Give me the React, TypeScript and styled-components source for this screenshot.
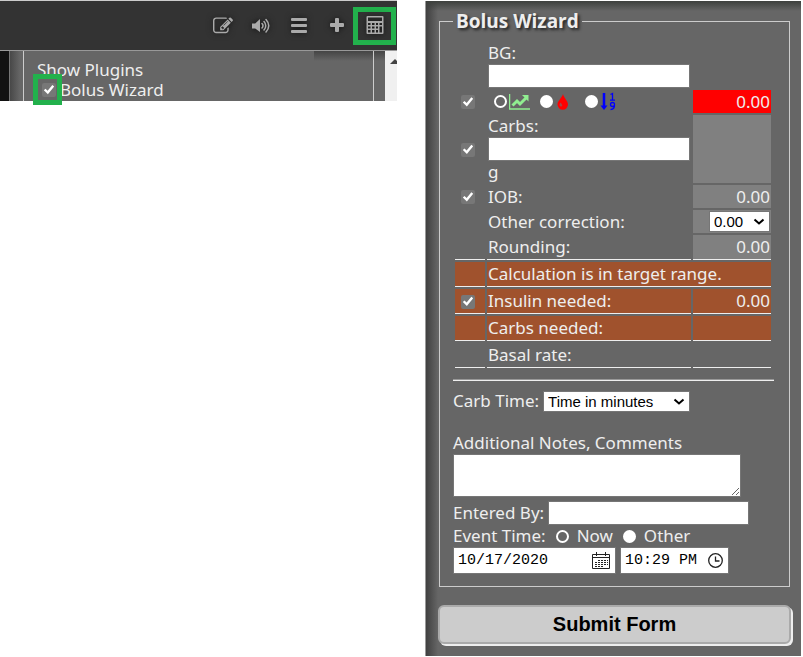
import React from "react";
import styled, { createGlobalStyle } from "styled-components";

const GlobalStyle = createGlobalStyle`
  *, *::before, *::after { box-sizing: border-box; }
  body {
    margin: 0;
    background: #fff;
    color: #eee;
    font-family: "Noto Sans", "Open Sans", sans-serif;
    font-size: 17px;
    line-height: 22px;
  }
`;

const Page = styled.main`
  display: grid;
  grid-template-columns: 397fr 376fr;
  gap: 28px;
  align-items: start;
  padding-right: 2px;
`;

/* ---------- toolbar preview ---------- */

const Preview = styled.section`
  border-top: 1px solid #ccc;
`;

const Toolbar = styled.nav`
  display: flex;
  align-items: center;
  justify-content: flex-end;
  height: 49px;
  padding-right: 1px;
  background: #333;
`;

const ToolButton = styled.button<{ $marked?: boolean }>`
  display: flex;
  align-items: center;
  justify-content: center;
  width: ${(p) => (p.$marked ? 43 : 33)}px;
  height: 38px;
  margin: 0 0 0 ${(p) => (p.$marked ? 0 : 5)}px;
  padding: 0;
  border: ${(p) => (p.$marked ? "5px solid #22b14c" : "0")};
  background: none;
  color: #aaa;
  cursor: pointer;
  svg { filter: drop-shadow(0 0 3px #111); }
`;

const PluginArea = styled.div`
  display: flex;
  height: 51px;
  border-top: 1px solid #999;
  background: #666;
`;

const ChartEdge = styled.div`
  width: 10px;
  border-right: 1px solid #777;
  background: #111;
`;

const PluginPane = styled.div`
  display: flex;
  flex: 1;
  padding: 0 11px 0 13px;
  background:
    linear-gradient(#444, #666) top right / 71px 10px no-repeat,
    linear-gradient(90deg, #484848, #666) left / 10px 100% no-repeat;
`;

const PluginList = styled.div`
  flex: 1;
  padding: 9px 0 0 13px;
  border: solid #ccc;
  border-width: 0 1px;
  line-height: 20px;
`;

const PluginOption = styled.label`
  display: flex;
  align-items: center;
  gap: 4px;
  padding-left: 5px;
`;

const Marker = styled.span`
  position: relative;
  display: flex;
  &::after {
    content: "";
    position: absolute;
    inset: -9px -6px -8px -9px;
    border: 5px solid #22b14c;
    pointer-events: none;
  }
`;

const ScrollStrip = styled.div`
  display: flex;
  justify-content: flex-end;
  width: 12px;
  padding-top: 8px;
  background: #f0f0f0;
`;

/* ---------- form controls ---------- */

const Checkbox = styled.input.attrs({ type: "checkbox" })`
  appearance: none;
  display: inline-block;
  width: 14px;
  height: 14px;
  margin: 0;
  border-radius: 2px;
  background: #777;
  vertical-align: middle;
  &:checked::before {
    content: "";
    display: block;
    width: 14px;
    height: 14px;
    background: #fff;
    clip-path: polygon(13% 52%, 25% 41%, 40% 56%, 74% 15%, 87% 25%, 42% 80%);
  }
`;

const Radio = styled.input.attrs({ type: "radio" })`
  appearance: none;
  flex: none;
  width: 13px;
  height: 13px;
  margin: 0;
  border: 2px solid #fff;
  border-radius: 50%;
  background: #fff;
  &:checked { background: #666; }
`;

const TextInput = styled.input`
  display: block;
  width: 100%;
  height: 24px;
  padding: 1px 4px;
  border: 1px solid #767676;
  background: #fff;
  color: #000;
  font: 15px "Liberation Sans", sans-serif;
`;

const Notes = styled.textarea`
  display: block;
  width: 288px;
  max-width: 100%;
  height: 43px;
  margin-bottom: 4px;
  padding: 2px 4px;
  border: 1px solid #767676;
  background: #fff;
  color: #000;
  font: 15px "Liberation Sans", sans-serif;
`;

const SelectBox = styled.span`
  position: relative;
  display: inline-flex;
  svg {
    position: absolute;
    right: 5px;
    top: 7px;
    pointer-events: none;
  }
`;

const Select = styled.select<{ $width: number }>`
  appearance: none;
  width: ${(p) => p.$width}px;
  height: 21px;
  padding: 0 4px;
  border: 1px solid #767676;
  border-radius: 0;
  background: #fff;
  color: #000;
  font: 15px/19px "Liberation Sans", sans-serif;
`;

const PickerBox = styled.span<{ $width: number }>`
  display: flex;
  align-items: center;
  width: ${(p) => p.$width}px;
  height: 27px;
  padding: 0 4px;
  border: 1px solid #767676;
  background: #fff;
`;

const PickerInput = styled.input`
  flex: 1;
  min-width: 0;
  height: 25px;
  padding: 0;
  border: 0;
  outline: 0;
  background: none;
  color: #000;
  font: 15px "Liberation Mono", monospace;
`;

const PickerButton = styled.button`
  display: flex;
  padding: 0;
  border: 0;
  background: none;
  color: #222;
`;

/* ---------- wizard ---------- */

const Wizard = styled.form`
  margin-top: 1px;
  padding: 8px 11px 12px 13px;
  border-left: 1px solid #999;
  background:
    linear-gradient(#3d403d, rgba(102, 102, 102, 0)) top / 100% 10px no-repeat,
    linear-gradient(90deg, #404040, rgba(102, 102, 102, 0)) left / 12px 100% no-repeat,
    #666;
`;

const Fieldset = styled.fieldset`
  min-width: 0;
  margin: 0;
  padding: 7px 15px 12px 13px;
  border: 1px solid #ccc;
`;

const Legend = styled.legend`
  padding: 0 3px;
  font-family: "Open Sans", "Noto Sans", sans-serif;
  font-size: 19px;
  font-weight: 700;
  line-height: 24px;
  text-shadow: 2px 2px 3px #222;
`;

const CalcTable = styled.table`
  width: calc(100% - 1px);
  border-collapse: separate;
  border-spacing: 2px;
  table-layout: fixed;
  td, th { padding: 0 1px; font-weight: 400; text-align: left; }
`;

const CheckCol = styled.col`
  width: 30px;
`;

const ValueCol = styled.col`
  width: 78px;
`;

const Row = styled.tr<{ $height: number; $ruled?: boolean; $brown?: boolean }>`
  height: ${(p) => p.$height}px;
  & > td, & > th {
    ${(p) => p.$ruled && "border-bottom: 1px solid #eee;"}
    ${(p) => p.$brown && "background: #a0522d;"}
  }
  & > td:first-child { text-align: center; line-height: 14px; padding-right: 5px; }
`;

const Value = styled.td<{ $bg?: string }>`
  && { text-align: right; }
  ${(p) => p.$bg && `background: ${p.$bg};`}
`;

const Sources = styled.div`
  display: flex;
  align-items: center;
  padding-left: 6px;
`;

const Source = styled.label<{ $width: number }>`
  display: flex;
  align-items: center;
  gap: 2px;
  width: ${(p) => p.$width}px;
  svg { flex: none; }
`;

const Rule = styled.hr`
  height: 2px;
  margin: 9px 0;
  border: 0;
  border-top: 1px solid #999;
  background: #eee;
`;

const Line = styled.div<{ $gap?: number; $space?: number; $end?: boolean }>`
  display: flex;
  align-items: center;
  justify-content: ${(p) => (p.$end ? "flex-end" : "flex-start")};
  gap: ${(p) => p.$gap ?? 4}px;
  margin-bottom: ${(p) => p.$space ?? 0}px;
`;

const Block = styled.label`
  display: block;
`;

const Choice = styled.label`
  display: flex;
  align-items: center;
  gap: 8px;
`;

const Author = styled(TextInput)`
  width: 201px;
`;

const Submit = styled.button`
  display: block;
  width: calc(100% + 2px);
  height: 39px;
  margin: 18px -1px 0;
  border: 2px solid #aaa;
  border-radius: 6px;
  background: #ccc;
  box-shadow: 2px 2px 0 #eee;
  color: #000;
  font: bold 20px "Liberation Sans", sans-serif;
  cursor: pointer;
`;

/* ---------- icons ---------- */

const EditIcon = () => (
  <svg width="20" height="20" viewBox="0 0 1792 1792" fill="currentColor">
    <path d="M888 1184l116-116-152-152-116 116v56h96v96h56zm440-720q-16-16-33 1l-350 350q-17 17-1 33t33-1l350-350q17-17 1-33zm80 594v190q0 119-84.5 203.5t-203.5 84.5h-832q-119 0-203.5-84.5t-84.5-203.5v-832q0-119 84.5-203.5t203.5-84.5h832q63 0 117 25 15 7 18 23 3 17-9 29l-49 49q-14 14-32 8-23-6-45-6h-832q-66 0-113 47t-47 113v832q0 66 47 113t113 47h832q66 0 113-47t47-113v-126q0-13 9-22l64-64q15-15 35-7t20 29zm-96-738l288 288-672 672h-288v-288zm444 132l-92 92-288-288 92-92q28-28 68-28t68 28l152 152q28 28 28 68t-28 68z" />
  </svg>
);

const VolumeIcon = () => (
  <svg width="18" height="16" viewBox="0 0 18 16" fill="none" stroke="currentColor" strokeWidth="1.500" strokeLinecap="round">
    <path d="M0 5.500h3.200L8 1v13L3.200 10.500H0z" fill="currentColor" stroke="none" />
    <path d="M10 5.500q2 2.250 0 4.500M12 3.500q3.500 4.200 0 8.500M14 1.500q5.500 6.200 0 12.500" />
  </svg>
);

const MenuIcon = () => (
  <svg width="18" height="16" viewBox="0 0 18 16" fill="currentColor">
    <rect x="1" y="0" width="16" height="3" rx="1" />
    <rect x="1" y="6" width="16" height="3" rx="1" />
    <rect x="1" y="12" width="16" height="3" rx="1" />
  </svg>
);

const PlusIcon = () => (
  <svg width="16" height="16" viewBox="0 0 16 16" fill="currentColor">
    <rect x="6" y="0" width="4" height="14" rx="1" />
    <rect x="1" y="5" width="14" height="4" rx="1" />
  </svg>
);

const CalculatorIcon = () => (
  <svg width="18" height="20" viewBox="0 0 18 20">
    <path
      fill="currentColor"
      fillRule="evenodd"
      d="M1.500 0h15a1 1 0 0 1 1 1v16a1 1 0 0 1-1 1h-15a1 1 0 0 1-1-1V1a1 1 0 0 1 1-1zM2 1.500V5h14V1.500zM2 7v2h2.500V7zM6 7v2h2.500V7zM10 7v2h2V7zM13.500 7v2H16V7zM2 10.500v2h2.500v-2zM6 10.500v2h2.500v-2zM10 10.500v2h2v-2zM2 14v2.500h2.500V14zM6 14v2.500h2.500V14zM10 14v2.500h2V14zM13.500 10.500v6H16v-6z"
    />
  </svg>
);

const ScrollUpIcon = () => (
  <svg width="7" height="5" viewBox="0 0 7 5" fill="#444">
    <path d="M0 5L5 0l2 2v3z" />
  </svg>
);

const Chevron = () => (
  <svg width="12" height="8" viewBox="0 0 12 8" fill="none" stroke="#000" strokeWidth="2">
    <path d="M1.500 1.500L6 5.500l4.500-4" />
  </svg>
);

const SensorIcon = () => (
  <svg width="21" height="17" viewBox="0 0 21 17" fill="none" stroke="lightgreen">
    <path d="M.5 1v15H21" strokeWidth="1.500" />
    <path d="M3.500 12.500L8 8l3 3 6-6" strokeWidth="3" />
    <path d="M13 2h6.500v6.500z" fill="lightgreen" stroke="none" />
  </svg>
);

const DropIcon = () => (
  <svg width="14" height="16" viewBox="0 0 14 16">
    <path d="M8 0C8.500 3.500 13 6.800 13 10.300a5 5.200 0 0 1-10.500 0C2.500 6.800 7.300 3.500 8 0z" fill="red" />
    <path d="M5.500 8.500q-2 2.500 0 4 1.800.2 1.800-1.300Q7 10 5.500 8.500z" fill="#a44" />
  </svg>
);

const ManualIcon = () => (
  <svg width="17" height="19" viewBox="0 0 17 19" fill="none" stroke="blue">
    <path d="M4 1v13" strokeWidth="2.500" />
    <path d="M.5 13.500h7L4 18z" fill="blue" stroke="none" />
    <path d="M10.500 2.500l2-1V8M10 8.200h5M14.500 12.500a2 2 0 1 1-4 0 2 2 0 0 1 4 0zM14.500 12.500q.3 5-4 5" strokeWidth="1.300" />
  </svg>
);

const CalendarIcon = () => (
  <svg width="19" height="18" viewBox="0 0 19 18" fill="none" stroke="currentColor">
    <path d="M.5 2.500h17v14H.5zM.5 5.500h17M4.500 0v4M13.500 0v4" />
    <path d="M6 8.500h10M3 10.500h13M3 12.500h13M3 14.500h8" strokeDasharray="2 1" />
  </svg>
);

const ClockIcon = () => (
  <svg width="16" height="16" viewBox="0 0 16 16" fill="none" stroke="currentColor" strokeWidth="1.300">
    <circle cx="7.500" cy="7.500" r="6.800" />
    <path d="M7.500 3.500V8h4" />
  </svg>
);

const Dropdown = ({ id, width, value }: { id: string; width: number; value: string }) => (
  <SelectBox>
    <Select id={id} $width={width}>
      <option>{value}</option>
    </Select>
    <Chevron />
  </SelectBox>
);

export default function App() {
  return (
    <>
      <GlobalStyle />
      <Page>
        <Preview>
          <Toolbar>
            <ToolButton aria-label="Edit"><EditIcon /></ToolButton>
            <ToolButton aria-label="Volume"><VolumeIcon /></ToolButton>
            <ToolButton aria-label="Menu"><MenuIcon /></ToolButton>
            <ToolButton aria-label="Add"><PlusIcon /></ToolButton>
            <ToolButton aria-label="Bolus Wizard" $marked><CalculatorIcon /></ToolButton>
          </Toolbar>
          <PluginArea>
            <ChartEdge />
            <PluginPane>
              <PluginList>
                <div>Show Plugins</div>
                <PluginOption>
                  <Marker><Checkbox defaultChecked /></Marker>
                  Bolus Wizard
                </PluginOption>
              </PluginList>
            </PluginPane>
            <ScrollStrip><ScrollUpIcon /></ScrollStrip>
          </PluginArea>
        </Preview>

        <Wizard onSubmit={(e) => e.preventDefault()}>
          <Fieldset>
            <Legend>Bolus Wizard</Legend>
            <CalcTable>
              <colgroup>
                <CheckCol />
                <col />
                <ValueCol />
              </colgroup>
              <tbody>
                <Row $height={46}>
                  <td />
                  <th scope="row">
                    <label htmlFor="bg">BG:</label>
                    <TextInput id="bg" />
                  </th>
                  <td />
                </Row>
                <Row $height={23}>
                  <td><Checkbox defaultChecked aria-label="Use BG" /></td>
                  <td>
                    <Sources>
                      <Source $width={46}><Radio name="source" defaultChecked aria-label="Sensor" /><SensorIcon /></Source>
                      <Source $width={45}><Radio name="source" aria-label="Meter" /><DropIcon /></Source>
                      <Source $width={45}><Radio name="source" aria-label="Manual" /><ManualIcon /></Source>
                    </Sources>
                  </td>
                  <Value $bg="red">0.00</Value>
                </Row>
                <Row $height={68}>
                  <td><Checkbox defaultChecked aria-label="Use carbs" /></td>
                  <th scope="row">
                    <label htmlFor="carbs">Carbs:</label>
                    <TextInput id="carbs" />
                    g
                  </th>
                  <Value $bg="gray" />
                </Row>
                <Row $height={23}>
                  <td><Checkbox defaultChecked aria-label="Use IOB" /></td>
                  <th scope="row">IOB:</th>
                  <Value $bg="gray">0.00</Value>
                </Row>
                <Row $height={23}>
                  <td />
                  <th scope="row"><label htmlFor="other">Other correction:</label></th>
                  <Value $bg="gray"><Line $end><Dropdown id="other" width={61} value="0.00" /></Line></Value>
                </Row>
                <Row $height={25} $ruled>
                  <td />
                  <th scope="row">Rounding:</th>
                  <Value $bg="gray">0.00</Value>
                </Row>
                <Row $height={25} $ruled $brown>
                  <td />
                  <td colSpan={2}>Calculation is in target range.</td>
                </Row>
                <Row $height={25} $ruled $brown>
                  <td><Checkbox defaultChecked aria-label="Use insulin" /></td>
                  <th scope="row">Insulin needed:</th>
                  <Value>0.00</Value>
                </Row>
                <Row $height={25} $ruled $brown>
                  <td />
                  <th scope="row">Carbs needed:</th>
                  <Value />
                </Row>
                <Row $height={25} $ruled>
                  <td />
                  <th scope="row">Basal rate:</th>
                  <Value />
                </Row>
              </tbody>
            </CalcTable>
            <Rule />
            <Line $space={20}>
              <label htmlFor="carbTime">Carb Time:</label>
              <Dropdown id="carbTime" width={147} value="Time in minutes" />
            </Line>
            <Block htmlFor="notes">Additional Notes, Comments</Block>
            <Notes id="notes" />
            <Line>
              <label htmlFor="author">Entered By:</label>
              <Author id="author" />
            </Line>
            <Line $gap={10}>
              <span>Event Time:</span>
              <Choice><Radio name="when" defaultChecked />Now</Choice>
              <Choice><Radio name="when" />Other</Choice>
            </Line>
            <Line>
              <PickerBox $width={163}>
                <PickerInput aria-label="Event date" defaultValue="10/17/2020" />
                <PickerButton type="button" aria-label="Pick date"><CalendarIcon /></PickerButton>
              </PickerBox>
              <PickerBox $width={109}>
                <PickerInput aria-label="Event time" defaultValue="10:29 PM" />
                <PickerButton type="button" aria-label="Pick time"><ClockIcon /></PickerButton>
              </PickerBox>
            </Line>
          </Fieldset>
          <Submit type="submit">Submit Form</Submit>
        </Wizard>
      </Page>
    </>
  );
}
